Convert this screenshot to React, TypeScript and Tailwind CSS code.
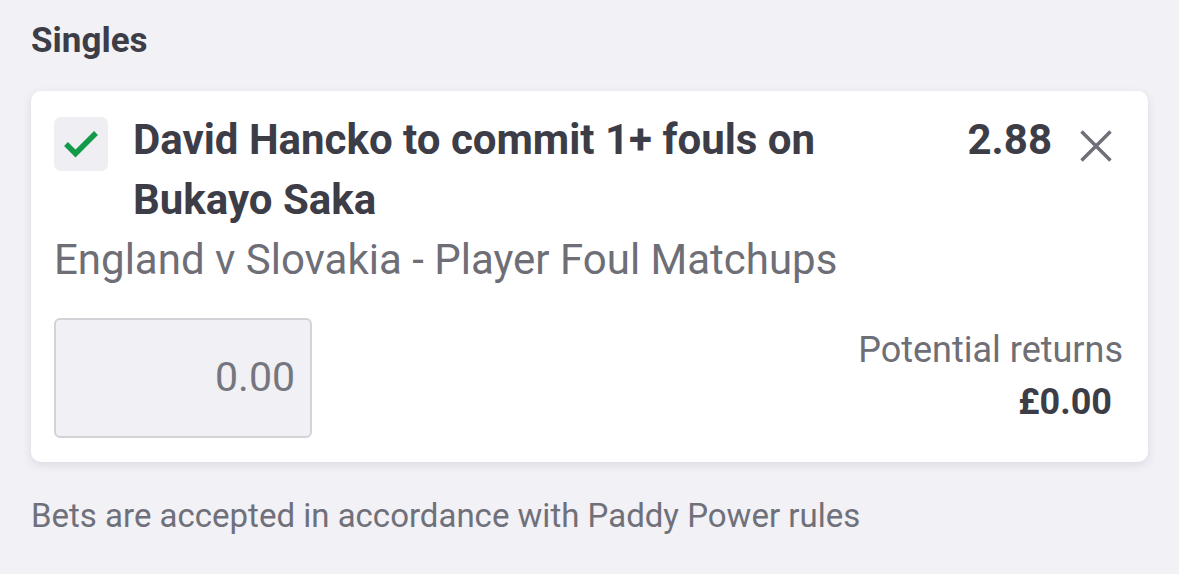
import React from "react";

function CheckBox() {
  return (
    <div className="h-[54px] w-[54px] shrink-0 rounded-[7px] bg-[#eeeef3]">
      <svg width="54" height="54" viewBox="0 0 54 54" fill="none">
        <path d="M12 27 L21.5 36.5 L42 16" stroke="#139a48" strokeWidth="5.5" strokeLinecap="butt" strokeLinejoin="miter" />
      </svg>
    </div>
  );
}

function CloseIcon() {
  return (
    <svg width="34" height="34" viewBox="0 0 34 34" fill="none">
      <path d="M2.5 2.5 L31.5 31.5 M31.5 2.5 L2.5 31.5" stroke="#6f6f78" strokeWidth="3.5" />
    </svg>
  );
}

export default function App() {
  return (
    <div className="h-[574px] w-[1179px] bg-[#f1f1f6] px-[31px] pt-[21px] font-['Roboto',sans-serif] text-[#3d3d47]">
      <h2 className="text-[35px] font-bold leading-[40px]">Singles</h2>
      <div className="mt-[30px] w-[1117px] rounded-[10px] bg-white pb-[24px] pl-[23px] pr-[25px] pt-[26px] shadow-[0_3px_10px_rgba(60,60,90,0.12)]">
        <div className="flex items-start">
          <CheckBox />
          <div className="-mt-[7px] ml-[25px] flex-1 text-[42px] font-bold leading-[60px]">
            David Hancko to commit 1+ fouls on
            <br />
            Bukayo Saka
          </div>
          <div className="-mt-[7px] text-[42px] font-bold leading-[60px]">2.88</div>
          <div className="ml-[27px] mr-[10px] mt-[12px]">
            <CloseIcon />
          </div>
        </div>
        <div className="text-[42px] leading-[60px] text-[#6e6e76]">England v Slovakia - Player Foul Matchups</div>
        <div className="mt-[28px] flex items-start justify-between">
          <div className="flex h-[120px] w-[258px] items-center justify-end rounded-[6px] border-2 border-[#d2d2d7] bg-[#f0f0f5] pr-[15px] text-[41px] text-[#76767e]">
            0.00
          </div>
          <div className="mt-[6px] flex flex-col items-end">
            <div className="text-[36px] leading-[52px] text-[#6e6e76]">Potential returns</div>
            <div className="pr-[11px] text-[36px] font-bold leading-[52px]">£0.00</div>
          </div>
        </div>
      </div>
      <div className="mt-[34px] text-[33px] leading-[40px] text-[#70707a]">Bets are accepted in accordance with Paddy Power rules</div>
    </div>
  );
}
